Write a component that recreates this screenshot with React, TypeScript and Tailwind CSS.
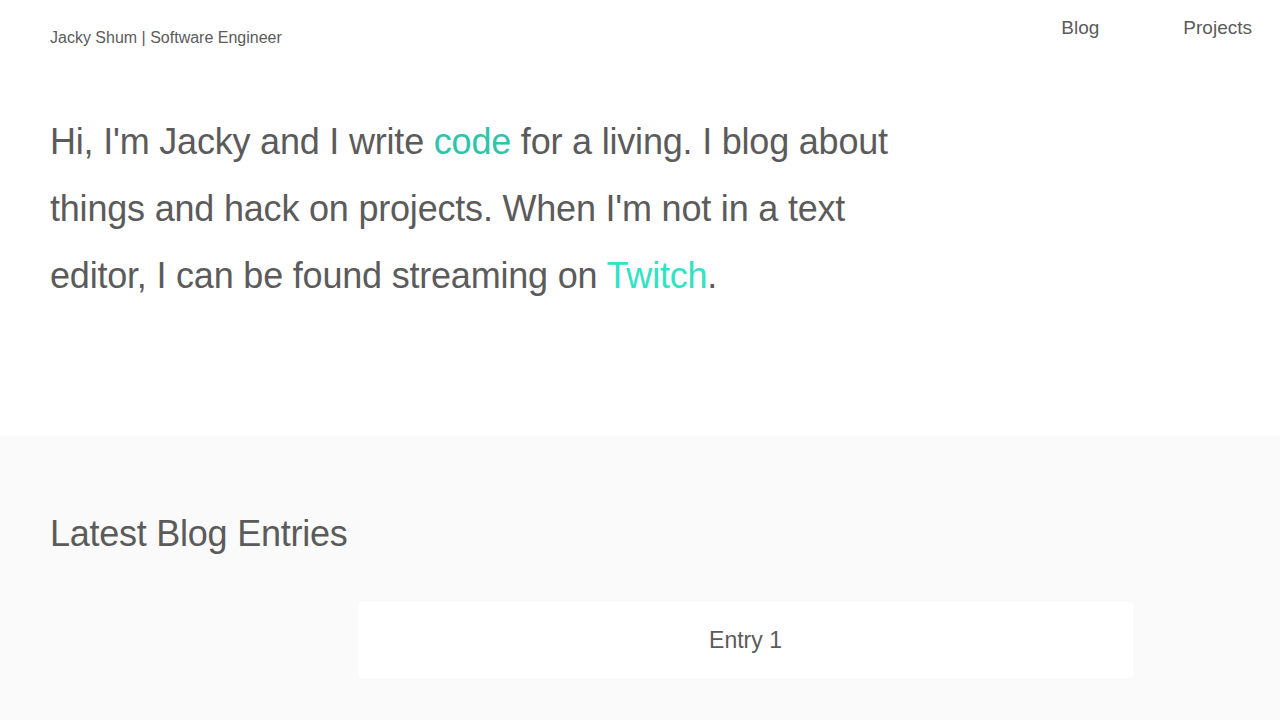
export default function App() {
  return (
    <div className="min-h-[720px] bg-white text-[#5b5b5b] font-['Liberation_Sans',Arial,sans-serif]">
      {/* Header */}
      <header className="flex h-[47px] items-start justify-between pl-[50px] pr-[28px]">
        <div className="pt-[28px] text-[16px] leading-[20px]">Jacky Shum | Software Engineer</div>
        <nav className="flex gap-[84px] pt-[18px] text-[19px] leading-[20px]">
          <a>Blog</a>
          <a>Projects</a>
        </nav>
      </header>

      {/* Intro */}
      <section className="h-[389px] pl-[50px] pt-[61px]">
        <p className="max-w-[860px] text-[36px] leading-[67px] tracking-[-0.2px]">
          Hi, I'm Jacky and I write <a className="text-[#2cc5a8]">code</a> for a living. I blog about
          things and hack on projects. When I'm not in a text editor, I can be found streaming on{" "}
          <a className="text-[#31e2c3]">Twitch</a>.
        </p>
      </section>

      {/* Blog entries */}
      <section className="bg-[#fafafa] pb-[42px]">
        <h2 className="pl-[50px] pt-[77px] text-[36px] leading-[42px] tracking-[-0.25px]">Latest Blog Entries</h2>
        <div className="mt-[47px] flex">
          <div className="ml-[358px] flex h-[76px] w-[775px] items-center justify-center rounded-[4px] bg-white text-[23px]">
            Entry 1
          </div>
        </div>
      </section>
    </div>
  );
}
